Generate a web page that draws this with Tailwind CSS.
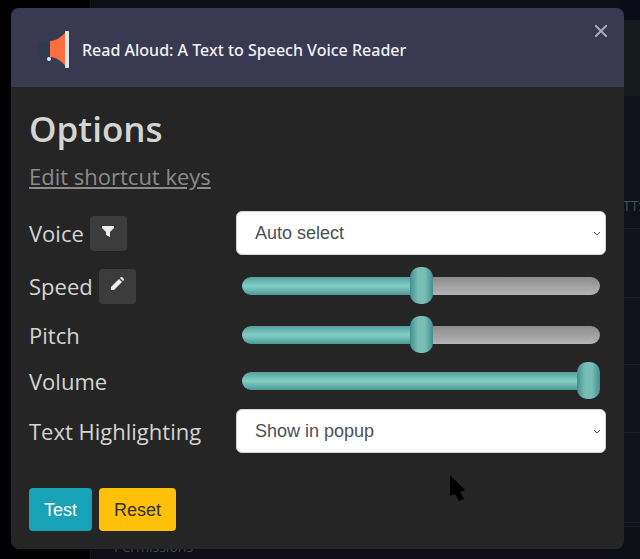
<!DOCTYPE html>
<html lang="en">
<head>
  <meta charset="UTF-8" />
  <meta name="viewport" content="width=device-width, initial-scale=1.0" />
  <title>Read Aloud: A Text to Speech Voice Reader</title>
  <script src="https://cdn.jsdelivr.net/npm/@tailwindcss/browser@4"></script>
</head>
<body class="relative min-h-screen overflow-hidden bg-[#0f121b] font-['Open_Sans','Noto_Sans',sans-serif] text-[#d4d4d4]">

  <!-- Page behind the popup -->
  <div class="absolute inset-0 flex" aria-hidden="true">
    <div class="w-[91px] border-r border-[#15171f] bg-[#010104]"></div>
    <div class="relative flex-1 overflow-hidden bg-[#0d0e16]">
      <div class="absolute right-0 top-0 h-full w-5">
        <div class="h-5 bg-[#0a0d18]"></div>
        <div class="h-[76px] bg-[#14191b]"></div>
        <div class="h-[133px] border-b border-[#1a1e28] bg-[#0f121b]"></div>
        <div class="h-[69px] border-b border-[#1a1e28] bg-[#0f121b]"></div>
        <div class="h-[67px] border-b border-[#1a1e28] bg-[#0f121b]"></div>
        <div class="h-[68px] border-b border-[#1a1e28] bg-[#0f121b]"></div>
        <div class="h-[90px] border-b border-[#1a1e28] bg-[#0f121b]"></div>
        <div class="h-1 border-b border-[#1a1e28] bg-[#0f121b]"></div>
      </div>
      <span class="absolute left-[532px] top-[196px] text-sm text-[#494c55]">TTS</span>
      <span class="absolute bottom-0.5 left-[23px] text-sm leading-5 text-[#45464d]">Permissions</span>
    </div>
  </div>

  <!-- Popup -->
  <main class="relative ml-[11px] mr-4 mt-2 overflow-hidden rounded-lg bg-[#252525]">
    <header class="relative flex h-[79px] items-center bg-[#393a52] pl-6 pt-1">
      <svg class="h-10 w-10" viewBox="0 0 40 40">
        <rect x="3" y="12" width="12" height="17" rx="5" fill="#2c3b52" />
        <path d="M15 11 C21 11 26 7 31 2 V36 C26 31 21 27 15 27 Z" fill="#fb6f3e" />
        <rect x="30" y="1" width="4" height="37" rx="1" fill="#dfe3ea" />
        <circle cx="14" cy="29" r="2" fill="#d8eef5" />
      </svg>
      <span class="ml-[7px] font-['Noto_Sans',sans-serif] text-base font-medium text-[#f1f1f5]">Read Aloud: A Text to Speech Voice Reader</span>
      <button type="button" aria-label="Close" class="absolute right-4 top-4 p-px text-[#a9a9c0]">
        <svg class="h-3 w-3" viewBox="0 0 12 12" fill="none" stroke="currentColor" stroke-width="2">
          <path d="M0 0L12 12M12 0L0 12" />
        </svg>
      </button>
    </header>

    <form class="px-[18px] pb-[18px] pt-5">
      <h1 class="text-[35px] font-semibold leading-[44px]">Options</h1>
      <a href="#" class="mt-2 block w-fit text-[22px] leading-[34px] text-[#8b8b8b] underline underline-offset-2">Edit shortcut keys</a>

      <div class="mt-[13px] text-[22px]">
        <div class="grid h-[54px] grid-cols-[207px_1fr] items-center">
          <div class="flex items-center gap-1.5">
            <label for="voice">Voice</label>
            <button type="button" aria-label="Filter voices" class="flex h-[35px] w-[37px] justify-center rounded-sm bg-[#3c3c3c] pt-2.5">
              <svg class="h-3 w-3" viewBox="0 0 12 12" fill="#ededed"><path d="M0 0H12V2L8 6V11L4 9V6L0 2Z" /></svg>
            </button>
          </div>
          <div class="relative">
            <select id="voice" class="h-11 w-full appearance-none rounded-md border border-[#ced4da] bg-white px-[18px] font-['Liberation_Sans',sans-serif] text-lg text-[#495057]">
              <option>Auto select</option>
            </select>
            <svg class="pointer-events-none absolute right-[5px] top-5 h-1.5 w-2" viewBox="0 0 8 6" fill="none" stroke="#4a4a4a"><path d="M1 1L4 4L7 1" /></svg>
          </div>
        </div>

        <div class="grid h-[52px] grid-cols-[207px_1fr] items-center">
          <div class="flex items-center gap-1.5">
            <label for="speed">Speed</label>
            <button type="button" aria-label="Edit speed" class="flex h-[35px] w-[37px] justify-center rounded-sm bg-[#3c3c3c] pt-2">
              <svg class="h-[13px] w-[13px]" viewBox="0 0 13 13" fill="#ededed"><path d="M0 13V10L8 2L11 5L3 13ZM9 1L10 0H11L13 2V3L12 4Z" /></svg>
            </button>
          </div>
          <input id="speed" type="range" value="50" style="--fill: 50%" class="mx-1.5 h-[37px] appearance-none bg-transparent [&::-webkit-slider-runnable-track]:h-[18px] [&::-webkit-slider-runnable-track]:rounded-full [&::-webkit-slider-runnable-track]:bg-[linear-gradient(#569f9b,#83cfc6_50%,#4c9896),linear-gradient(#8c8c8c,#b4b4b4)] [&::-webkit-slider-runnable-track]:bg-[length:var(--fill)_100%,100%_100%] [&::-webkit-slider-runnable-track]:bg-no-repeat [&::-webkit-slider-thumb]:-mt-2.5 [&::-webkit-slider-thumb]:h-[37px] [&::-webkit-slider-thumb]:w-[23px] [&::-webkit-slider-thumb]:appearance-none [&::-webkit-slider-thumb]:rounded-[10px] [&::-webkit-slider-thumb]:bg-[linear-gradient(90deg,#438e8e,#78beb6_35%,#78beb6_65%,#438e8e)]" />
        </div>

        <div class="grid h-[46px] grid-cols-[207px_1fr] items-center">
          <label for="pitch">Pitch</label>
          <input id="pitch" type="range" value="50" style="--fill: 50%" class="mx-1.5 h-[37px] appearance-none bg-transparent [&::-webkit-slider-runnable-track]:h-[18px] [&::-webkit-slider-runnable-track]:rounded-full [&::-webkit-slider-runnable-track]:bg-[linear-gradient(#569f9b,#83cfc6_50%,#4c9896),linear-gradient(#8c8c8c,#b4b4b4)] [&::-webkit-slider-runnable-track]:bg-[length:var(--fill)_100%,100%_100%] [&::-webkit-slider-runnable-track]:bg-no-repeat [&::-webkit-slider-thumb]:-mt-2.5 [&::-webkit-slider-thumb]:h-[37px] [&::-webkit-slider-thumb]:w-[23px] [&::-webkit-slider-thumb]:appearance-none [&::-webkit-slider-thumb]:rounded-[10px] [&::-webkit-slider-thumb]:bg-[linear-gradient(90deg,#438e8e,#78beb6_35%,#78beb6_65%,#438e8e)]" />
        </div>

        <div class="grid h-[46px] grid-cols-[207px_1fr] items-center">
          <label for="volume">Volume</label>
          <input id="volume" type="range" value="100" style="--fill: 100%" class="mx-1.5 h-[37px] appearance-none bg-transparent [&::-webkit-slider-runnable-track]:h-[18px] [&::-webkit-slider-runnable-track]:rounded-full [&::-webkit-slider-runnable-track]:bg-[linear-gradient(#569f9b,#83cfc6_50%,#4c9896),linear-gradient(#8c8c8c,#b4b4b4)] [&::-webkit-slider-runnable-track]:bg-[length:var(--fill)_100%,100%_100%] [&::-webkit-slider-runnable-track]:bg-no-repeat [&::-webkit-slider-thumb]:-mt-2.5 [&::-webkit-slider-thumb]:h-[37px] [&::-webkit-slider-thumb]:w-[23px] [&::-webkit-slider-thumb]:appearance-none [&::-webkit-slider-thumb]:rounded-[10px] [&::-webkit-slider-thumb]:bg-[linear-gradient(90deg,#438e8e,#78beb6_35%,#78beb6_65%,#438e8e)]" />
        </div>

        <div class="grid h-[54px] grid-cols-[207px_1fr] items-center">
          <label for="highlighting">Text Highlighting</label>
          <div class="relative">
            <select id="highlighting" class="h-11 w-full appearance-none rounded-md border border-[#ced4da] bg-white px-[18px] font-['Liberation_Sans',sans-serif] text-lg text-[#495057]">
              <option>Show in popup</option>
            </select>
            <svg class="pointer-events-none absolute right-[5px] top-5 h-1.5 w-2" viewBox="0 0 8 6" fill="none" stroke="#4a4a4a"><path d="M1 1L4 4L7 1" /></svg>
          </div>
        </div>
      </div>

      <div class="mt-[30px] flex gap-[7px] font-['Liberation_Sans',sans-serif] text-lg">
        <button type="button" class="h-[43px] w-[63px] rounded bg-[#17a2b8] text-white">Test</button>
        <button type="button" class="h-[43px] w-[77px] rounded bg-[#ffc107] text-[#343020]">Reset</button>
      </div>
    </form>
  </main>

  <!-- Mouse pointer -->
  <svg class="absolute left-[450px] top-[475px] h-[26px] w-4" viewBox="0 0 16 26" fill="#000" aria-hidden="true">
    <path d="M0 0L15 15L10 17L14 24L9 26L5 19L0 21Z" />
  </svg>

</body>
</html>
